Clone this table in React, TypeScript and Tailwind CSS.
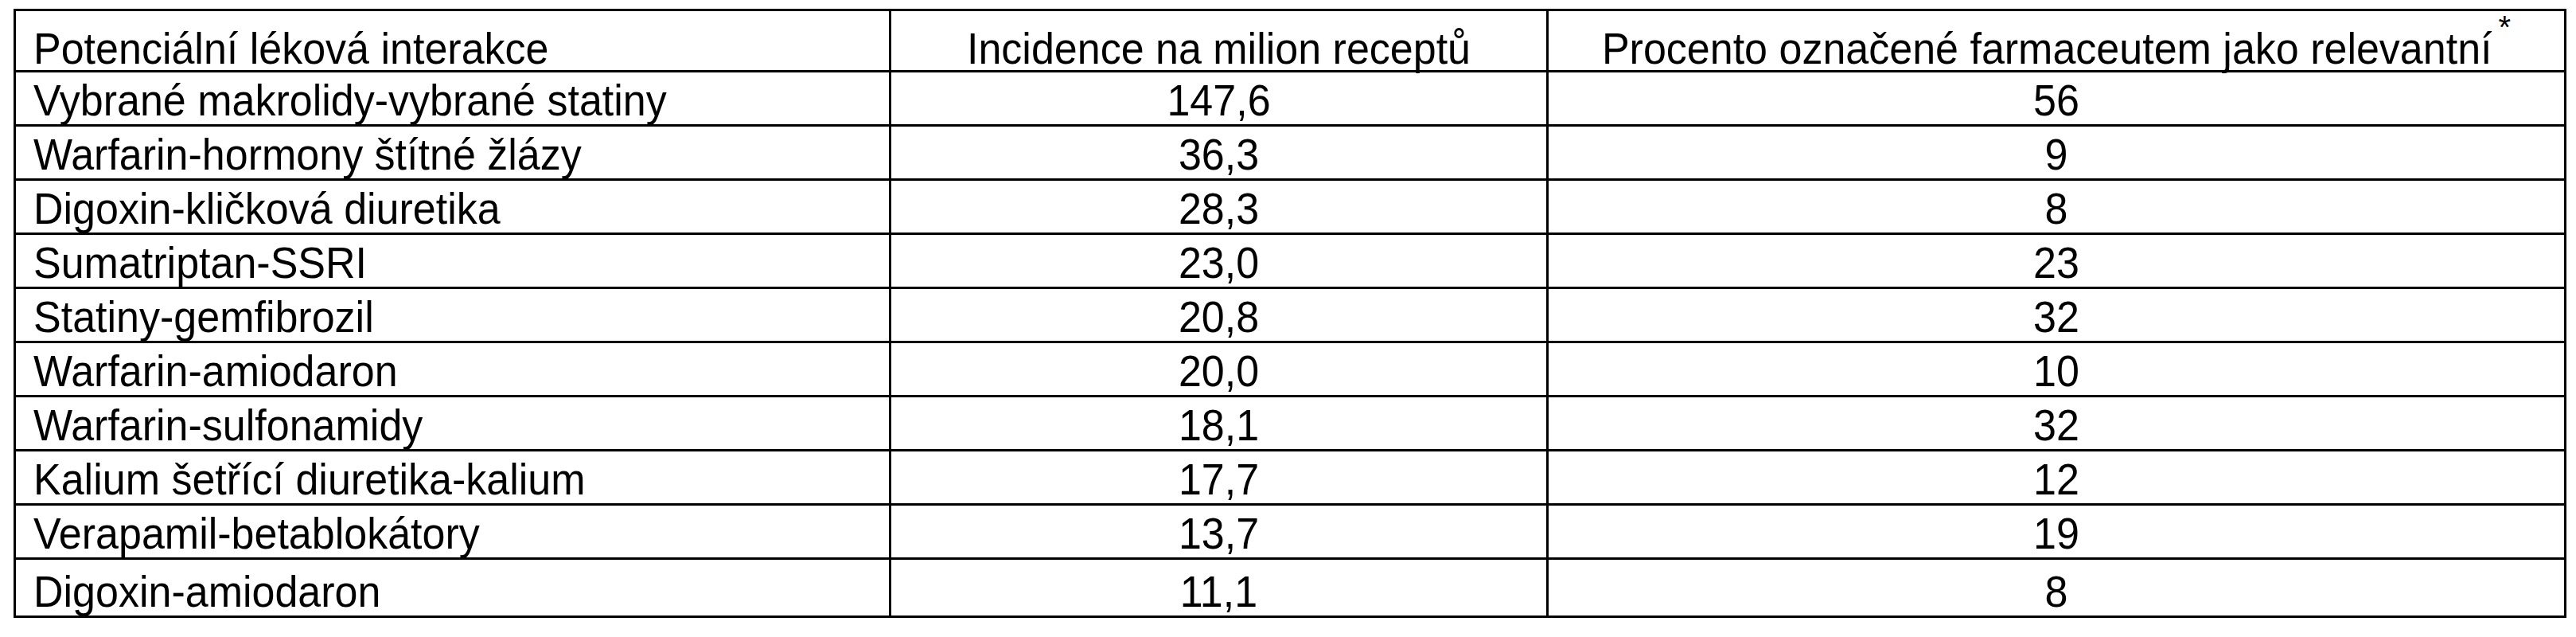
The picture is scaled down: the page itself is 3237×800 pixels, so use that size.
import React from "react";

const rows: [string, string, string][] = [
  ["Vybrané makrolidy-vybrané statiny", "147,6", "56"],
  ["Warfarin-hormony štítné žlázy", "36,3", "9"],
  ["Digoxin-kličková diuretika", "28,3", "8"],
  ["Sumatriptan-SSRI", "23,0", "23"],
  ["Statiny-gemfibrozil", "20,8", "32"],
  ["Warfarin-amiodaron", "20,0", "10"],
  ["Warfarin-sulfonamidy", "18,1", "32"],
  ["Kalium šetřící diuretika-kalium", "17,7", "12"],
  ["Verapamil-betablokátory", "13,7", "19"],
  ["Digoxin-amiodaron", "11,1", "8"],
];

function T({ children }: { children: React.ReactNode }) {
  return <span className="inline-block scale-y-[1.08]">{children}</span>;
}

export default function App() {
  return (
    <div
      className="w-[3237px] h-[800px] bg-white text-black pl-[17px] pt-[11px]"
      style={{ fontFamily: '"Liberation Sans", Arial, sans-serif' }}
    >
      <table className="table-fixed border-collapse border-[3px] border-black text-[52px] leading-none">
        <colgroup>
          <col className="w-[1100px]" />
          <col className="w-[826px]" />
          <col className="w-[1279px]" />
        </colgroup>
        <thead>
          <tr className="h-[77px]">
            <th className="border-[3px] border-black font-normal text-left pl-[22px] pb-[1px] align-bottom">
              <T>Potenciální léková interakce</T>
            </th>
            <th className="border-[3px] border-black font-normal text-center pb-[1px] align-bottom">
              <T>Incidence na milion receptů</T>
            </th>
            <th className="border-[3px] border-black font-normal text-center pb-[1px] align-bottom">
              <T>Procento označené farmaceutem jako relevantní</T>
              <sup className="text-[40px] leading-none align-baseline relative -top-[31px] ml-[8px]">*</sup>
            </th>
          </tr>
        </thead>
        <tbody>
          {rows.map((r, i) => (
            <tr key={i} className={i === rows.length - 1 ? "h-[73px]" : "h-[68px]"}>
              <td className="border-[3px] border-black text-left pl-[22px] pb-[4px] align-bottom">
                <T>{r[0]}</T>
              </td>
              <td className="border-[3px] border-black text-center pb-[4px] align-bottom">
                <T>{r[1]}</T>
              </td>
              <td className="border-[3px] border-black text-center pb-[4px] align-bottom">
                <T>{r[2]}</T>
              </td>
            </tr>
          ))}
        </tbody>
      </table>
    </div>
  );
}
